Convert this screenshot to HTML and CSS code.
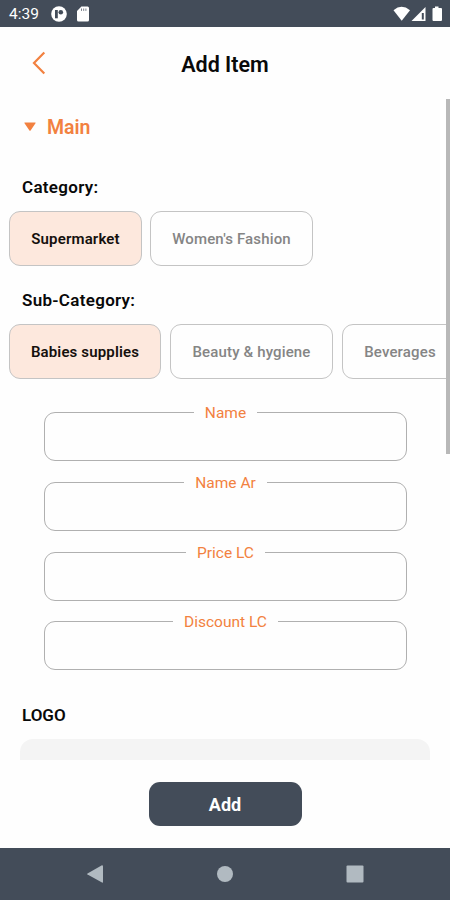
FILE: index.html
```html
<!DOCTYPE html>
<html lang="en">
<head>
<meta charset="utf-8">
<title>Add Item</title>
<link rel="stylesheet" href="styles.css">
</head>
<body>
<div class="status">
  <span class="time">4:39</span>
  <svg class="app-icon" width="16" height="16" viewBox="0 0 16 16"><circle cx="8" cy="8" r="7.800" fill="#fff"/><path d="M4 4h2.800v8.300H4z" fill="#434c59"/><circle cx="9.800" cy="6.200" r="2.300" fill="#434c59"/></svg>
  <svg class="sd-icon" width="12" height="16" viewBox="0 0 12 16"><path d="M4.400.5h6.200Q12 .5 12 2v12q0 1.500-1.500 1.500h-9Q0 15.500 0 14V5z" fill="#fff"/><path d="M4.500 2.500v2.400M6.700 2.500v2.400M8.900 2.500v2.400" stroke="#7a818b"/></svg>
  <svg class="signals" width="50" height="16" viewBox="0 0 50 16"><path d="M.5 4.200Q8.500-2.600 17 4.200L8.700 14.800z" fill="#fff"/><path d="M32.500 1v14H18.500z" fill="#fff"/><path d="M28.800 7h2v6.500h-2z" fill="#434c59"/><path d="M42 .5h3.500V2H48q1 0 1 1v11q0 1-1 1h-7.500q-1 0-1-1V3q0-1 1-1H42z" fill="#fff"/></svg>
</div>
<header class="header">
  <svg class="back" width="14" height="24" viewBox="0 0 14 24"><path d="M12.300 1.500 2 12l10.300 10.500" fill="none" stroke="#f28140" stroke-width="2.200"/></svg>
  <h1>Add Item</h1>
</header>
<main class="content">
  <div class="section"><svg width="12" height="10" viewBox="0 0 12 10"><path d="M.8.500h10.400q.8 0 .3.700L6.600 8.500q-.6.700-1.200 0L.5 1.200Q0 .500.800.500z" fill="#f28140"/></svg><span>Main</span></div>
  <h2 class="category">Category:</h2>
  <div class="chips">
    <button class="chip on w-super">Supermarket</button>
    <button class="chip w-women">Women's Fashion</button>
  </div>
  <h2 class="subcategory">Sub-Category:</h2>
  <div class="chips sub">
    <button class="chip on w-babies">Babies supplies</button>
    <button class="chip w-women">Beauty &amp; hygiene</button>
    <button class="chip w-bev">Beverages</button>
  </div>
  <form class="fields">
    <fieldset><legend>Name</legend></fieldset>
    <fieldset><legend>Name Ar</legend></fieldset>
    <fieldset><legend>Price LC</legend></fieldset>
    <fieldset><legend>Discount LC</legend></fieldset>
  </form>
  <h2 class="logo-title">LOGO</h2>
  <div class="upload"></div>
  <div class="scrollbar"></div>
</main>
<footer class="footer"><button class="add">Add</button></footer>
<nav class="nav">
  <svg width="18" height="20" viewBox="0 0 18 20"><path d="M16 1.300q1 0 1 1v15.400q0 1.300-1 .8L1.500 10.600q-.9-.6 0-1.200L15.500 1.500z" fill="#b1bac1"/></svg>
  <svg width="18" height="18" viewBox="0 0 18 18"><circle cx="9" cy="9" r="8" fill="#b1bac1"/></svg>
  <svg width="18" height="18" viewBox="0 0 18 18"><rect x=".5" y=".5" width="17" height="17" rx="1" fill="#b1bac1"/></svg>
</nav>
</body>
</html>
```
FILE: styles.css
```css
* { box-sizing: border-box; }
body {
  margin: 0;
  width: 450px;
  height: 900px;
  display: flex;
  flex-direction: column;
  overflow: hidden;
  background: #fefefe;
  color: #090909;
  font-family: Roboto, "Liberation Sans", sans-serif;
}
svg { display: block; flex: none; }
button { font: inherit; padding: 0; }
.status {
  flex: none;
  height: 27px;
  display: flex;
  align-items: center;
  padding: 0 8px 0 9px;
  background: #434c59;
  color: #fff;
}
.time { width: 42px; font-size: 15.500px; line-height: 26px; padding-top: 1px; }
.sd-icon { margin-left: 10px; }
.signals { margin-left: auto; margin-right: -1px; }
.header {
  flex: none;
  height: 72px;
  display: grid;
  grid-template-columns: 50px 1fr 50px;
  align-items: center;
}
.back { margin-left: 32px; }
h1 { margin: 3px 0 0; text-align: center; font-size: 21.500px; line-height: 26px; font-weight: 600; }
.content { position: relative; flex: none; height: 661px; overflow: hidden; }
.section {
  display: flex;
  align-items: center;
  gap: 11px;
  height: 24px;
  margin: 16px 0 0 24px;
  color: #f28140;
  font-size: 19.500px;
  font-weight: 600;
}
h2 { margin: 0 0 0 22px; font-size: 17px; line-height: 20px; font-weight: 600; letter-spacing: .3px; }
.category { margin-top: 38px; }
.subcategory { margin-top: 24px; }
.chips { display: flex; gap: 8px; margin: 14px 0 0 9px; }
.sub { gap: 9px; }
.chip {
  flex: none;
  height: 55px;
  border: 1px solid #c4c4c4;
  border-radius: 11px;
  background: #fefefe;
  color: #858585;
  font-size: 15px;
  font-weight: 500;
  letter-spacing: .15px;
}
.on { background: #fde8dd; color: #15100d; font-weight: 600; }
.w-super { width: 133px; }
.w-women { width: 163px; }
.w-babies { width: 152px; }
.w-bev { width: 116px; }
.fields { width: 363px; margin: 24px 0 0 44px; display: grid; gap: 11.800px; }
fieldset {
  min-width: 0;
  height: 58px;
  margin: 0;
  padding: 0;
  border: 1px solid #b0b0b0;
  border-radius: 11px;
}
legend { margin: 0 auto; padding: 1px 11px 0; height: 19px; line-height: 19px; font-size: 15.500px; color: #f28140; }
.logo-title { margin-top: 35px; letter-spacing: 0; }
.upload { width: 410px; height: 80px; margin: 14px 0 0 20px; border-radius: 13px; background: #f4f4f4; }
.scrollbar { position: absolute; top: 0; right: 0; width: 4px; height: 355px; background: #b8b8b8; }
.footer { flex: none; height: 88px; display: flex; justify-content: center; padding-top: 22px; }
.add { width: 153px; height: 44px; border: 0; border-radius: 11px; background: #434c59; color: #fff; font-size: 18px; font-weight: 700; }
.nav {
  flex: none;
  height: 52px;
  display: flex;
  align-items: center;
  justify-content: space-between;
  padding: 0 86px;
  background: #434c59;
}
```
